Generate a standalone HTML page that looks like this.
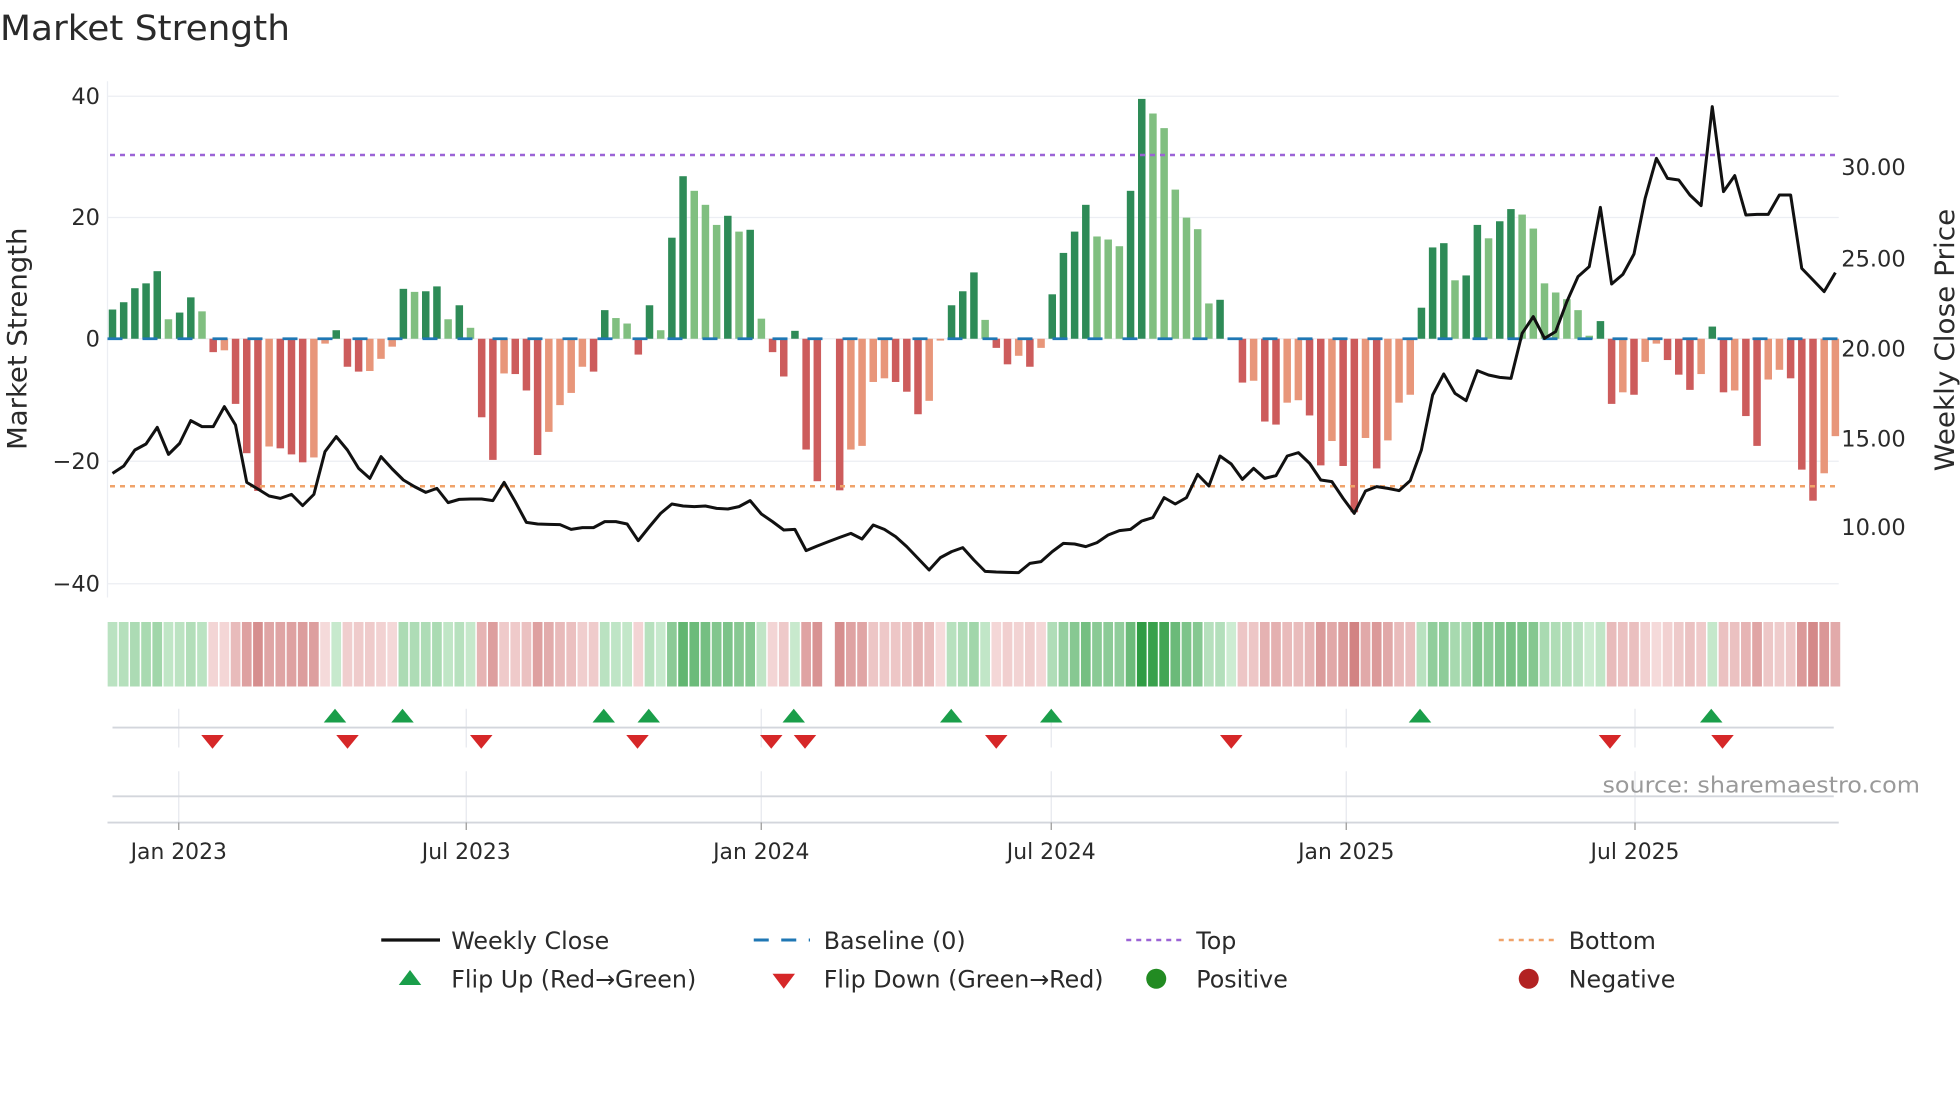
<!DOCTYPE html>
<html><head><meta charset="utf-8">
<style>
html,body{margin:0;padding:0;background:#fff;overflow:hidden}
svg{display:block}
text{font-family:"DejaVu Sans","Liberation Sans",sans-serif;fill:#2a2a2a}
</style></head>
<body>
<svg id="s" xmlns="http://www.w3.org/2000/svg" width="1960" height="1102" viewBox="0 0 1568 881.6">
<rect width="1568" height="881.6" fill="#fff"/>
<text x="0" y="32" font-size="28" textLength="232" lengthAdjust="spacingAndGlyphs">Market Strength</text>
<g stroke="#eceef3" stroke-width="1">
<line x1="86" y1="77" x2="1471" y2="77"/>
<line x1="86" y1="174" x2="1471" y2="174"/>
<line x1="86" y1="271" x2="1471" y2="271"/>
<line x1="86" y1="369" x2="1471" y2="369"/>
<line x1="86" y1="467" x2="1471" y2="467"/>
<line x1="86" y1="65" x2="86" y2="478"/>
</g>
<g font-size="18" text-anchor="end">
<text x="80" y="83">40</text><text x="80" y="180">20</text><text x="80" y="277">0</text>
<text x="80" y="375">−20</text><text x="80" y="473">−40</text>
</g>
<g font-size="18">
<text x="1473" y="140">30.00</text><text x="1473" y="213">25.00</text><text x="1473" y="285">20.00</text>
<text x="1473" y="357">15.00</text><text x="1473" y="428">10.00</text>
</g>
<text transform="translate(21,271) rotate(-90)" font-size="21" text-anchor="middle" textLength="178" lengthAdjust="spacingAndGlyphs">Market Strength</text>
<text transform="translate(1563,272) rotate(-90)" font-size="21" text-anchor="middle" textLength="210" lengthAdjust="spacingAndGlyphs">Weekly Close Price</text>
<g id="bars"></g>
<line x1="86" y1="271" x2="1471" y2="271" stroke="#1f77b4" stroke-width="2.2" stroke-dasharray="12,16"/>
<line x1="88" y1="124" x2="1471" y2="124" stroke="#9b63d6" stroke-width="2" stroke-dasharray="4,4"/>
<line x1="88" y1="389" x2="1471" y2="389" stroke="#f0a36a" stroke-width="2" stroke-dasharray="4,4"/>
<polyline id="price" fill="none" stroke="#111" stroke-width="2.4" stroke-linejoin="round"/>
<g id="heat"></g>
<g stroke="#e6e8ee" stroke-width="1">
<line x1="143" y1="567" x2="143" y2="598"/><line x1="373" y1="567" x2="373" y2="598"/><line x1="609" y1="567" x2="609" y2="598"/><line x1="841" y1="567" x2="841" y2="598"/><line x1="1077" y1="567" x2="1077" y2="598"/><line x1="1308" y1="567" x2="1308" y2="598"/>
<line x1="143" y1="617" x2="143" y2="658"/><line x1="373" y1="617" x2="373" y2="658"/><line x1="609" y1="617" x2="609" y2="658"/><line x1="841" y1="617" x2="841" y2="658"/><line x1="1077" y1="617" x2="1077" y2="658"/><line x1="1308" y1="617" x2="1308" y2="658"/>
</g>
<line x1="90" y1="582" x2="1467" y2="582" stroke="#d3d6dc" stroke-width="1.5"/>
<line x1="90" y1="637" x2="1467" y2="637" stroke="#d3d6dc" stroke-width="1.5"/>
<line x1="86" y1="658" x2="1471" y2="658" stroke="#d3d6dc" stroke-width="1.5"/>
<g stroke="#999" stroke-width="1">
<line x1="143" y1="658" x2="143" y2="664"/><line x1="373" y1="658" x2="373" y2="664"/><line x1="609" y1="658" x2="609" y2="664"/><line x1="841" y1="658" x2="841" y2="664"/><line x1="1077" y1="658" x2="1077" y2="664"/><line x1="1308" y1="658" x2="1308" y2="664"/>
</g>
<g id="flips"></g>
<text x="1536" y="634" font-size="18" fill="#9a9a9a" style="fill:#9a9a9a" text-anchor="end" textLength="254" lengthAdjust="spacingAndGlyphs">source: sharemaestro.com</text>
<g font-size="17.5" text-anchor="middle">
<text x="143" y="687">Jan 2023</text><text x="373" y="687">Jul 2023</text><text x="609" y="687">Jan 2024</text>
<text x="841" y="687">Jul 2024</text><text x="1077" y="687">Jan 2025</text><text x="1308" y="687">Jul 2025</text>
</g>
<g font-size="19">
<line x1="305" y1="752" x2="352" y2="752" stroke="#111" stroke-width="2.6"/>
<text x="361" y="759">Weekly Close</text>
<line x1="603" y1="752" x2="648" y2="752" stroke="#1f77b4" stroke-width="2.4" stroke-dasharray="12,10"/>
<text x="659" y="759">Baseline (0)</text>
<line x1="901" y1="752" x2="945" y2="752" stroke="#9b63d6" stroke-width="2" stroke-dasharray="4,4"/>
<text x="957" y="759">Top</text>
<line x1="1199" y1="752" x2="1243" y2="752" stroke="#f0a36a" stroke-width="2" stroke-dasharray="4,4"/>
<text x="1255" y="759">Bottom</text>
<polygon points="319,788 337,788 328,776" fill="#1a9e4a"/>
<text x="361" y="790">Flip Up (Red→Green)</text>
<polygon points="618,779 636,779 627,791" fill="#d62728"/>
<text x="659" y="790">Flip Down (Green→Red)</text>
<circle cx="925" cy="783" r="8" fill="#228b22"/>
<text x="957" y="790">Positive</text>
<circle cx="1223" cy="783" r="8" fill="#b22222"/>
<text x="1255" y="790">Negative</text>
</g>
</svg>
<script>
var NS="http://www.w3.org/2000/svg";
var v=[4.8,6.0,8.3,9.1,11.1,3.2,4.3,6.8,4.5,-2.2,-1.9,-10.7,-18.8,-25,-17.7,-18,-19,-20.3,-19.5,-0.8,1.4,-4.6,-5.4,-5.3,-3.3,-1.3,8.2,7.7,7.8,8.6,3.2,5.5,1.8,-12.9,-19.9,-5.7,-5.8,-8.5,-19.1,-15.3,-10.9,-8.9,-4.6,-5.4,4.7,3.4,2.5,-2.6,5.5,1.4,16.6,26.7,24.3,
22.0,18.7,20.2,17.6,17.9,3.3,-2.2,-6.2,1.3,-18.2,-23.4,0,-24.9,-18.2,-17.6,-7.1,-6.5,-7.1,-8.7,-12.4,-10.2,-0.3,5.5,7.8,10.9,3.1,-1.5,-4.2,-2.8,-4.6,-1.5,7.3,14.1,17.6,22,16.8,16.3,15.2,24.3,39.4,37,34.6,24.5,19.9,18,5.8,6.4,0,-7.2,-6.9,-13.6,-14.1,
-10.5,-10.1,-12.6,-20.8,-16.8,-20.9,-28.5,-16.3,-21.3,-16.7,-10.5,-9.2,5.1,15,15.7,9.6,10.4,18.7,16.5,19.3,21.3,20.4,18.1,9.1,7.6,6.5,4.7,0.5,2.9,-10.7,-8.8,-9.2,-3.8,-0.8,-3.5,-5.9,-8.4,-5.8,2.0,-8.8,-8.5,-12.7,-17.6,-6.7,-5.1,-6.5,-21.5,-26.6,-22.1,-16];
var t="DDDDDLDDLRSRRRSRRRSSDRRSSSDLDDLDLRRSRRRSSSSRDLLRDLDDL"+"LLDLDLRRDRRXRSSSSRRRSSDDDLRRSRSDDDDLLLDDLLLLLLDXRSRR"+"SSRRSRRSRSSSDDDLDDLDDLLLLLLLDRSRSSRRRSDRSRRSSRRRSS";
var col={D:"#2e8b57",L:"#80bf80",R:"#cd5c5c",S:"#e8967a"};
var P=8.95,X0=90,U=4.87;
var bars=document.getElementById("bars"),heat=document.getElementById("heat");
function mix(a,b,k){return "rgb("+a.map(function(x,i){return Math.round(x+(b[i]-x)*k)}).join(",")+")";}
for(var i=0;i<v.length;i++){
 var x=X0+P*i,c=t[i];
 if(c!=="X"&&v[i]!==0){
  var h=Math.abs(v[i])*U,r=document.createElementNS(NS,"rect");
  r.setAttribute("x",x-3);r.setAttribute("width",6);
  r.setAttribute("y",v[i]>0?271-h:271);r.setAttribute("height",h);
  r.setAttribute("fill",col[c]);bars.appendChild(r);
 }
 if(i===64)continue;
 var k=Math.min(1,Math.abs(v[i])/40),f;
 if(v[i]>=0)f=mix([205,236,210],[45,155,65],k);else f=mix([246,220,220],[195,95,95],k);
 var hr=document.createElementNS(NS,"rect");
 hr.setAttribute("x",x-P/2+0.6);hr.setAttribute("width",P-1.2);
 hr.setAttribute("y",497.6);hr.setAttribute("height",51.6);hr.setAttribute("fill",f);heat.appendChild(hr);
}
var z=[1180,1158,1110,1092,1042,1123,1090,1022,1040,1040,980,1035,1207,1227,1248,1255,1243,1277,1243,1115,1070,1110,1165,1195,1130,1167,1200,1220,1237,1225,1268,1258,1257,1257,1262,1207,1265,1327,1332,1333,1334,1348,1343,1343,1325,1325,1332,1382,1340,1300,1272,
1278,1280,1278,1285,1287,1280,1262,1302,1325,1350,1348,1412,1398,1385,1372,1360,1377,1335,1348,1370,1400,1435,1470,1433,1415,1403,1440,1474,1476,1477,1478,1450,1445,1415,1390,1392,1400,1388,1365,1352,1348,1323,1313,1253,1272,1253,1183,1218,1128,1152,1198,1165,
1195,1187,1128,1118,1150,1200,1205,1255,1300,1233,1220,1225,1232,1202,1110,945,882,940,962,872,885,892,895,760,710,775,755,665,590,560,382,612,583,522,355,235,295,300,345,377,80,335,287,405,403,403,345,345,565,600,635,578];
var pts=[];for(var j=0;j<z.length;j++){pts.push((X0+P*j).toFixed(1)+","+(64+z[j]/3.75).toFixed(1));}
document.getElementById("price").setAttribute("points",pts.join(" "));
var fl=document.getElementById("flips");
[268,322,483,519,635,761,841,1136,1369].forEach(function(x){var p=document.createElementNS(NS,"polygon");p.setAttribute("points",(x-9)+",578 "+(x+9)+",578 "+x+",567");p.setAttribute("fill","#1a9e4a");fl.appendChild(p);});
[170,278,385,510,617,644,797,985,1288,1378].forEach(function(x){var p=document.createElementNS(NS,"polygon");p.setAttribute("points",(x-9)+",588 "+(x+9)+",588 "+x+",599");p.setAttribute("fill","#d62728");fl.appendChild(p);});
</script>
</body></html>
